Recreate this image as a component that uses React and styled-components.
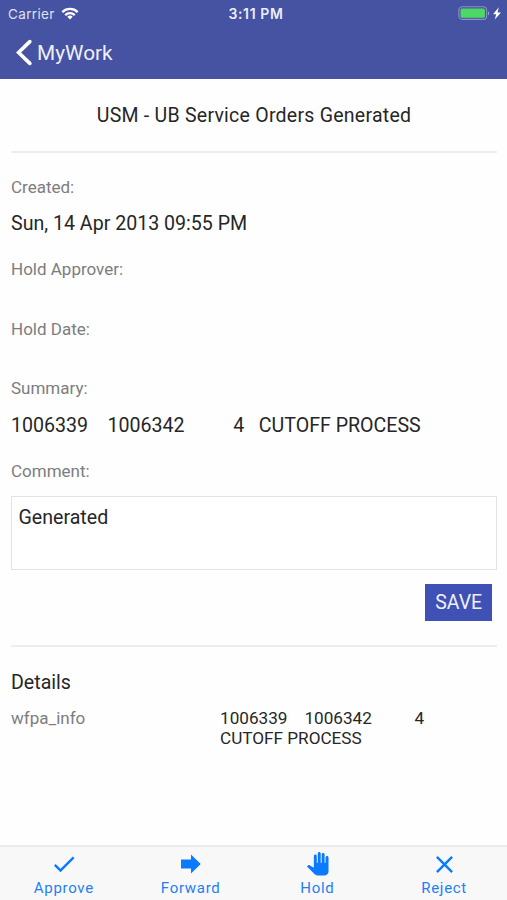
import styled, { createGlobalStyle } from 'styled-components';
import { MdCheck, MdClose, MdPanTool } from 'react-icons/md';

const fields = [
  { label: 'Created:', value: 'Sun, 14 Apr 2013 09:55 PM' },
  { label: 'Hold Approver:', value: '' },
  { label: 'Hold Date:', value: '' },
  { label: 'Summary:', value: '1006339    1006342          4   CUTOFF PROCESS' },
];

const tabs = [
  { label: 'Approve', icon: <MdCheck size={28} /> },
  { label: 'Forward', icon: <ForwardIcon /> },
  { label: 'Hold', icon: <MdPanTool size={23.5} /> },
  { label: 'Reject', icon: <MdClose size={29} /> },
];

export default function App() {
  return (
    <Screen>
      <GlobalStyle />
      <Header>
        <StatusBar>
          <Carrier>
            Carrier <WifiIcon />
          </Carrier>
          <Clock>3:11 PM</Clock>
          <BatteryWrapper>
            <BatteryIcon />
          </BatteryWrapper>
        </StatusBar>
        <NavBar>
          <BackIcon />
          <NavTitle>MyWork</NavTitle>
        </NavBar>
      </Header>
      <Content>
        <Title>USM - UB Service Orders Generated</Title>
        <Divider />
        <Fields>
          {fields.map((el) => (
            <div key={el.label}>
              <Label>{el.label}</Label>
              <Value>{el.value}</Value>
            </div>
          ))}
          <Label>Comment:</Label>
        </Fields>
        <Comment defaultValue="Generated" />
        <SaveButton>SAVE</SaveButton>
        <Divider />
        <DetailsTitle>Details</DetailsTitle>
        <DetailRow>
          <Label>wfpa_info</Label>
          <DetailValue>{'1006339    1006342          4   CUTOFF PROCESS'}</DetailValue>
        </DetailRow>
      </Content>
      <TabBar>
        {tabs.map((el) => (
          <Tab key={el.label}>
            <TabIcon>{el.icon}</TabIcon>
            {el.label}
          </Tab>
        ))}
      </TabBar>
    </Screen>
  );
}

function WifiIcon() {
  return (
    <svg width="18" height="13" viewBox="0 0 18 13" fill="none" stroke="#fff" strokeWidth="2.3">
      <path d="M1.3 5.1a11 11 0 0 1 15.4 0" />
      <path d="M4.2 8.1a6.9 6.9 0 0 1 9.6 0" />
      <path d="M9 12.4L6.3 9.8a3.9 3.9 0 0 1 5.4 0z" fill="#fff" stroke="none" />
    </svg>
  );
}

function BatteryIcon() {
  return (
    <svg width="44" height="15" viewBox="0 0 44 15">
      <rect x="0.8" y="0.8" width="27.8" height="12.6" rx="3.4" fill="none" stroke="#8b92c8" strokeWidth="1.1" />
      <rect x="2.5" y="2.4" width="24.4" height="9.4" rx="1.5" fill="#4cd964" />
      <path d="M30 5.2c1.8.7 1.8 3.5 0 4.2z" fill="#9299cd" />
      <path d="M40.8 1.2L35 8.2h3.2L36.8 13.6 43 6.4h-3.4z" fill="#fff" />
    </svg>
  );
}

function BackIcon() {
  return (
    <svg width="17" height="27" viewBox="0 0 17 27" fill="none" stroke="#fff" strokeWidth="3.6" strokeLinecap="round">
      <path d="M14.8 2.6L3.6 13.5l11.2 10.9" />
    </svg>
  );
}

function ForwardIcon() {
  return (
    <svg width="22" height="20" viewBox="0 0 22 20" fill="currentColor">
      <path d="M1 5.4h10V0.6L20.7 10 11 19.4v-4.8H1z" />
    </svg>
  );
}

const GlobalStyle = createGlobalStyle`
  * {
    box-sizing: border-box;
  }
  body {
    margin: 0;
    background: #fff;
    font-family: 'Roboto', sans-serif;
  }
`;

const Screen = styled.div`
  display: flex;
  flex-direction: column;
  width: 507px;
  height: 900px;
  background: #fefefe;
  color: #262626;
`;

const Header = styled.header`
  height: 79px;
  background: #4652a2;
  color: #fff;
`;

const StatusBar = styled.div`
  display: grid;
  grid-template-columns: 1fr auto 1fr;
  align-items: center;
  height: 27px;
  padding: 0 5px 0 8px;
  font-family: 'Inter', sans-serif;
  font-size: 13.5px;
`;

const Carrier = styled.div`
  display: flex;
  align-items: center;
  gap: 6px;
  color: #dfe1f2;
  letter-spacing: 0.35px;
`;

const Clock = styled.div`
  padding-left: 2px;
  font-size: 14px;
  font-weight: 600;
  letter-spacing: 0.6px;
  color: #eceefa;
`;

const BatteryWrapper = styled.div`
  display: flex;
  justify-content: flex-end;
`;

const NavBar = styled.div`
  display: flex;
  align-items: center;
  height: 51px;
  padding-left: 15px;
  gap: 5px;
`;

const NavTitle = styled.div`
  font-size: 20.8px;
  color: #eef0fa;
`;

const Content = styled.main`
  display: flex;
  flex-direction: column;
  flex: 1;
  padding: 0 10px 0 11px;
`;

const Title = styled.h1`
  margin: 0;
  padding-top: 1px;
  font-size: 19.5px;
  font-weight: 400;
  line-height: 71px;
  letter-spacing: 0.25px;
  text-align: center;
`;

const Divider = styled.div`
  height: 2px;
  background: #ededed;
`;

const Fields = styled.section`
  padding-top: 23.6px;
`;

const Label = styled.div`
  font-size: 17px;
  line-height: 20px;
  color: #7d7d7d;
`;

const Value = styled.div`
  padding: 15.5px 0 24px;
  font-size: 19.6px;
  line-height: 23px;
  white-space: pre;
`;

const Comment = styled.textarea`
  height: 74px;
  margin-top: 15.4px;
  padding: 9px 6.5px;
  border: 1px solid #e3e3e3;
  outline: none;
  resize: none;
  background: #fff;
  color: inherit;
  font: 400 19.6px/23px 'Roboto', sans-serif;
`;

const SaveButton = styled.button`
  align-self: flex-end;
  width: 67.5px;
  height: 37px;
  margin: 14px 4.6px 24px 0;
  padding: 0;
  border: 0;
  background: #3f51b5;
  color: #eef0fb;
  font: 400 19.5px 'Roboto', sans-serif;
`;

const DetailsTitle = styled.h2`
  margin: 24px 0 14px;
  font-size: 19.6px;
  font-weight: 400;
  line-height: 23px;
`;

const DetailRow = styled.div`
  display: grid;
  grid-template-columns: 209px 215px;
`;

const DetailValue = styled.div`
  font-size: 17.15px;
  line-height: 20px;
  white-space: pre-wrap;
`;

const TabBar = styled.nav`
  display: grid;
  grid-template-columns: repeat(4, 1fr);
  height: 55px;
  border-top: 2px solid #ebebeb;
  background: #f8f8f8;
`;

const Tab = styled.div`
  display: flex;
  flex-direction: column;
  align-items: center;
  padding-left: 1px;
  font-size: 15px;
  line-height: 18px;
  letter-spacing: 0.7px;
  color: #1e80f5;
`;

const TabIcon = styled.div`
  display: flex;
  align-items: center;
  justify-content: center;
  height: 32px;
  padding-top: 2px;
  color: #0a7aff;
`;
